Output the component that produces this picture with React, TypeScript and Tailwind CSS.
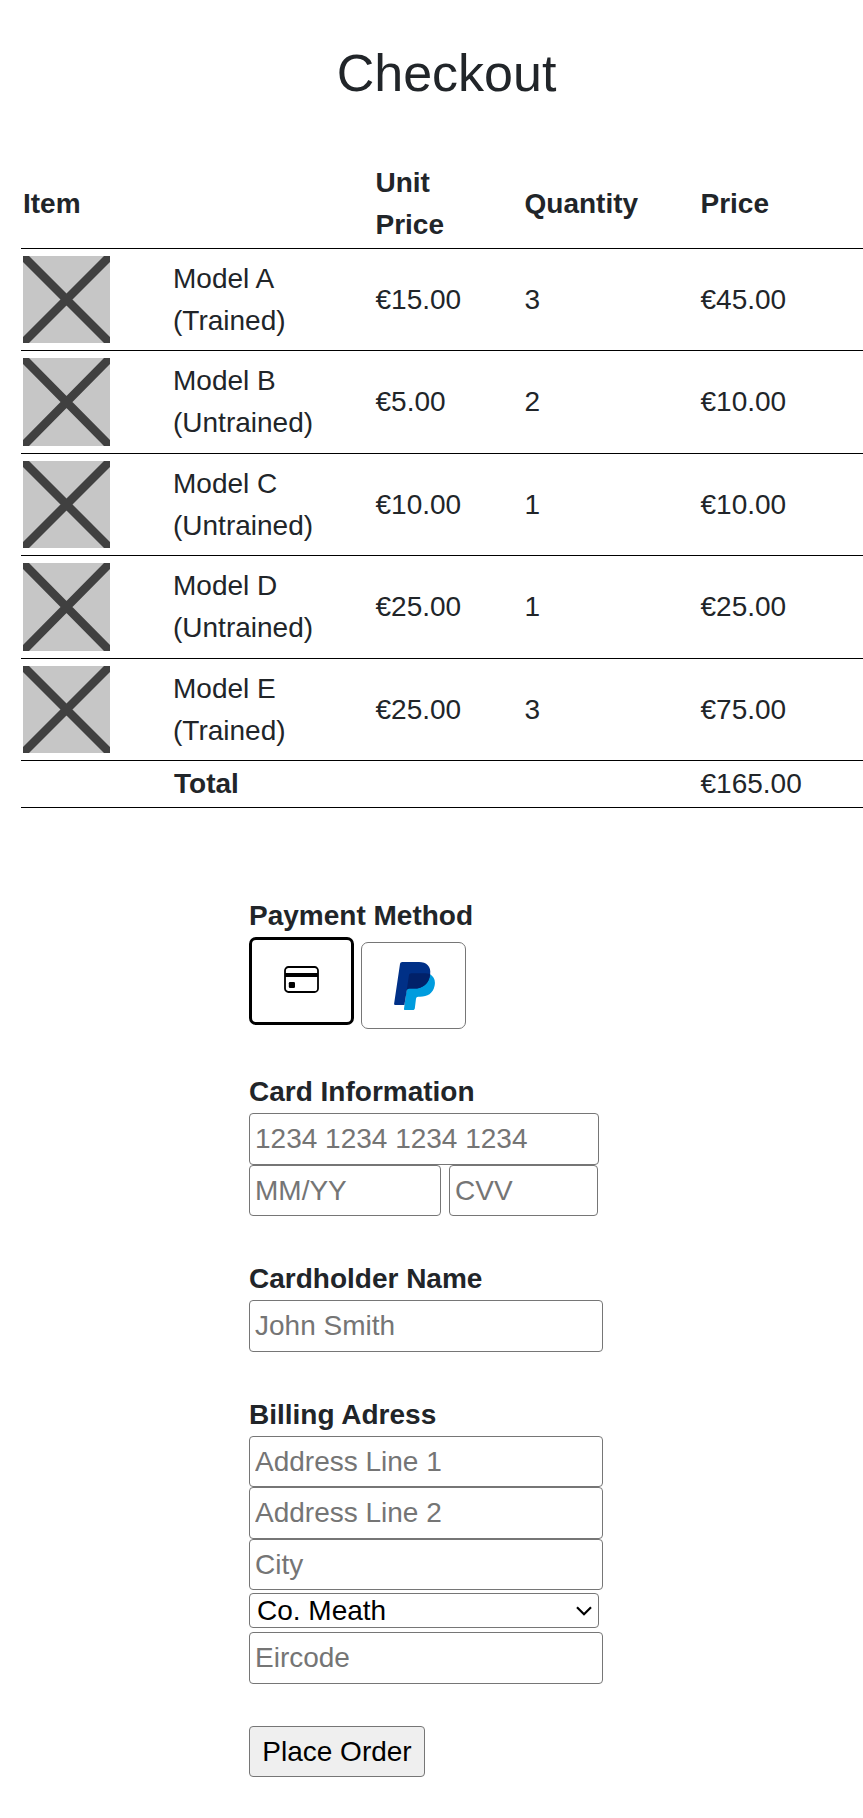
import React from "react";

const items = [
  { name: "Model A", kind: "(Trained)", unit: "€15.00", qty: 3, price: "€45.00", row: "h-[102px]" },
  { name: "Model B", kind: "(Untrained)", unit: "€5.00", qty: 2, price: "€10.00", row: "h-[103px]" },
  { name: "Model C", kind: "(Untrained)", unit: "€10.00", qty: 1, price: "€10.00", row: "h-[102px]" },
  { name: "Model D", kind: "(Untrained)", unit: "€25.00", qty: 1, price: "€25.00", row: "h-[103px]" },
  { name: "Model E", kind: "(Trained)", unit: "€25.00", qty: 3, price: "€75.00", row: "h-[102px]" },
];

const rowGrid =
  "grid grid-cols-[150px_202.500px_149px_176px_1fr] items-center border-b border-black pl-[2px]";

function Placeholder({ tall }: { tall: boolean }) {
  return (
    <svg
      viewBox="0 0 87 87"
      preserveAspectRatio="none"
      className={tall ? "h-[88px] w-[87px]" : "h-[87px] w-[87px]"}
    >
      <rect width="87" height="87" fill="#c6c6c6" />
      <path d="M0 0L87 87M87 0L0 87" stroke="#404040" strokeWidth="8.500" />
    </svg>
  );
}

function CardIcon() {
  return (
    <svg viewBox="0 0 35 27" className="h-[27px] w-[35px]">
      <rect x="1" y="1" width="33" height="25" rx="3.500" fill="none" stroke="#000" strokeWidth="1.800" />
      <rect x="1" y="7" width="33" height="4" fill="#000" />
      <rect x="4.800" y="16" width="6.200" height="6" rx="1.200" fill="#000" />
    </svg>
  );
}

function PayPalLogo() {
  return (
    <svg viewBox="0 0 41 48" className="h-[48px] w-[41px]">
      <path d="M35.7 12C40 14.500 41.700 18.500 40.600 23.800C39 31.500 33.500 34.800 26 34.800H24.200C23 34.800 22.200 35.600 22 36.700L20.800 46.500C20.600 47.400 20 48 19 48H11C10.300 48 9.900 47.500 10 46.800L13 24.500Z" fill="#009cde" />
      <path d="M36.200 12C35.100 22 28.800 26.600 20 26.600H15.400C14 26.600 13 27.400 12.700 28.800L10.400 43H1C.3 43 0 42.500.100 41.800L6 1.900C6.200.800 7.100 0 8.200 0H25C32.500 0 37.300 4.500 36.200 12Z" fill="#003087" />
      <path d="M14.900 13.400C15.100 12.100 16.100 11.200 17.400 11.200H30C32.200 11.200 34.700 11.400 36.200 12C35.100 22 28.800 26.600 20 26.600H15.400C14 26.600 13 27.400 12.700 28.800Z" fill="#012169" />
    </svg>
  );
}

function Field({ placeholder, className }: { placeholder: string; className: string }) {
  return (
    <input
      type="text"
      placeholder={placeholder}
      aria-label={placeholder}
      className={`block rounded-[4px] border border-[#767676] bg-white px-[5px] leading-[42px] text-black outline-none placeholder:text-[#757575] placeholder:opacity-100 ${className}`}
    />
  );
}

function Label({ children }: { children: React.ReactNode }) {
  return <div className="h-[43px] pt-px font-bold">{children}</div>;
}

export default function App() {
  return (
    <div className="h-[1818px] w-full overflow-hidden bg-white font-['Liberation_Sans',Arial,sans-serif] text-[28px] leading-[42px] text-[#212529]">
      <h1 className="pt-[42px] pl-[30px] text-center text-[52px] leading-[62px]">Checkout</h1>

      <div className="mt-[53px] ml-[21px]">
        <div className={`${rowGrid} h-[92px] pt-[3px] font-bold`}>
          <div>Item</div>
          <div />
          <div>
            Unit
            <br />
            Price
          </div>
          <div>Quantity</div>
          <div>Price</div>
        </div>
        {items.map((item) => (
          <div key={item.name} className={`${rowGrid} ${item.row}`}>
            <Placeholder tall={item.row === "h-[103px]"} />
            <div>
              {item.name}
              <br />
              {item.kind}
            </div>
            <div>{item.unit}</div>
            <div>{item.qty}</div>
            <div>{item.price}</div>
          </div>
        ))}
        <div className={`${rowGrid} h-[47px]`}>
          <div />
          <div className="pl-px font-bold">Total</div>
          <div />
          <div />
          <div>€165.00</div>
        </div>
      </div>

      <form className="mt-[86px] ml-[249px] w-[360px]">
        <Label>Payment Method</Label>
        <div className="flex gap-[7px]">
          <button
            type="button"
            aria-label="Card"
            className="flex h-[88px] w-[105px] items-center justify-center rounded-[7px] border-[3px] border-black bg-white pb-[3px]"
          >
            <CardIcon />
          </button>
          <button
            type="button"
            aria-label="PayPal"
            className="mt-[5px] flex h-[87px] w-[105px] items-center justify-center rounded-[7px] border border-[#767676] bg-white pt-px pl-px"
          >
            <PayPalLogo />
          </button>
        </div>

        <div className="pt-[41px]">
          <Label>Card Information</Label>
          <Field placeholder="1234 1234 1234 1234" className="h-[52px] w-[350px]" />
          <div className="flex gap-[8px]">
            <Field placeholder="MM/YY" className="h-[51px] w-[192px]" />
            <Field placeholder="CVV" className="h-[51px] w-[149px]" />
          </div>
        </div>

        <div className="pt-[41px]">
          <Label>Cardholder Name</Label>
          <Field placeholder="John Smith" className="h-[52px] w-[354px]" />
        </div>

        <div className="pt-[41px]">
          <Label>Billing Adress</Label>
          <Field placeholder="Address Line 1" className="h-[51px] w-[354px]" />
          <Field placeholder="Address Line 2" className="h-[52px] w-[354px]" />
          <Field placeholder="City" className="h-[51px] w-[354px]" />
          <div className="mt-[3px] grid w-[350px]">
            <select
              aria-label="County"
              className="col-start-1 row-start-1 h-[35px] appearance-none rounded-[4px] border border-[#767676] bg-white pl-[7px] leading-[33px] text-black"
            >
              <option>Co. Meath</option>
            </select>
            <svg
              viewBox="0 0 16 10"
              className="pointer-events-none col-start-1 row-start-1 mr-[7px] h-[10px] w-[16px] self-center justify-self-end"
            >
              <path d="M1 1.200L8 8.200L15 1.200" fill="none" stroke="#000" strokeWidth="2.200" />
            </svg>
          </div>
          <Field placeholder="Eircode" className="mt-[4px] h-[52px] w-[354px]" />
        </div>

        <button
          type="button"
          className="mt-[42px] block h-[51px] w-[176px] rounded-[4px] border border-[#767676] bg-[#efefef] text-center text-black"
        >
          Place Order
        </button>
      </form>
    </div>
  );
}
